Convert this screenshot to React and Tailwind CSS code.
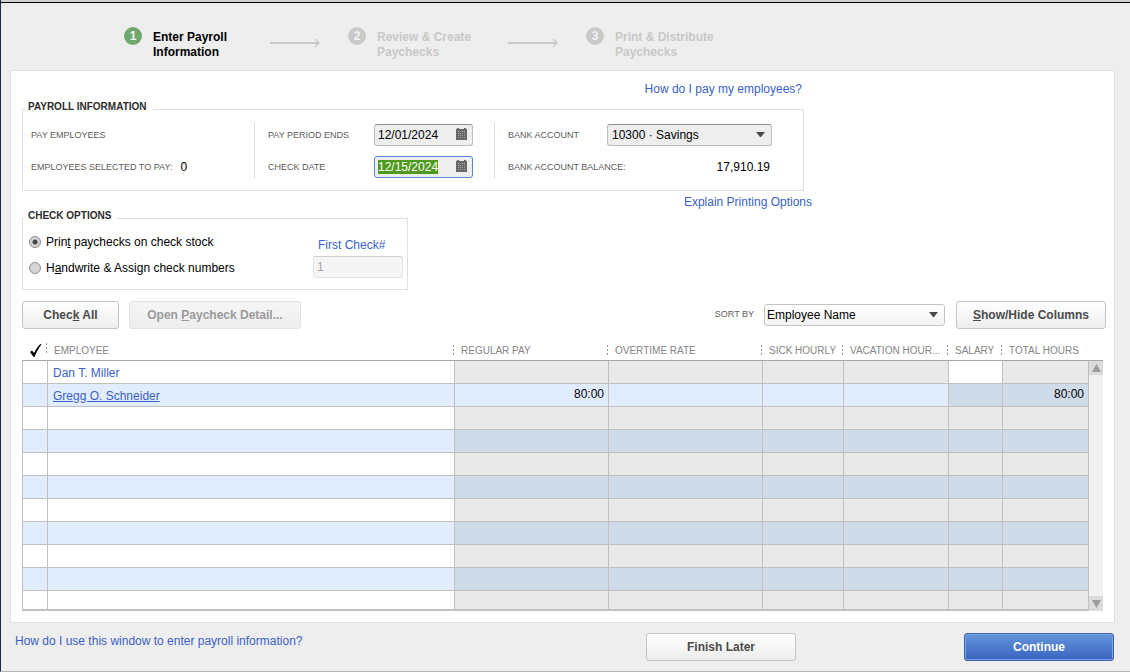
import { useEffect, useRef, useState } from 'react';
import clsx from 'clsx';

const STEPS = [
  { lines: ['Enter Payroll', 'Information'], width: 'w-[117px]' },
  { lines: ['Review & Create', 'Paychecks'], width: 'w-[131px]' },
  { lines: ['Print & Distribute', 'Paychecks'], width: 'w-[131px]' },
];

const COLUMNS = [
  { key: 'regular',  label: 'REGULAR PAY',      width: 'w-[154px]' },
  { key: 'overtime', label: 'OVERTIME RATE',    width: 'w-[154px]' },
  { key: 'sick',     label: 'SICK HOURLY',      width: 'w-[81px]' },
  { key: 'vacation', label: 'VACATION HOUR...', width: 'w-[105px]' },
  { key: 'salary',   label: 'SALARY',           width: 'w-[54px]' },
  { key: 'total',    label: 'TOTAL HOURS',      width: 'w-[86px]' },
];

const EMPLOYEES = [
  { name: 'Dan T. Miller', open: ['salary'], hours: {} },
  {
    name: 'Gregg O. Schneider',
    underline: true,
    open: ['regular', 'overtime', 'sick', 'vacation'],
    hours: { regular: '80:00', total: '80:00' },
  },
];

const ROWS = Array.from({ length: 11 }, (_, i) => EMPLOYEES[i] || { open: [], hours: {} });

const LABEL = 'text-[9px] text-[#5c5c5c]';
const LINK = 'text-[#3a5fc8]';
const LEGEND = 'ml-px pr-[6px] pb-1 pl-1 text-[10px] leading-3 font-bold text-[#2b2b2b]';
const FIELD = 'block h-[22px] w-full rounded-[3px] border bg-[#eeeeee] text-[12px] text-black outline-none';
const FIELD_BORDER = 'border-[#bdbdbd] border-t-[#8f8f8f]';

function Arrow() {
  return (
    <svg width="50" height="10" viewBox="0 0 50 10" className="mt-[11px] mr-7 shrink-0" fill="none" stroke="#c8c8c8">
      <path d="M0 5H49" strokeWidth="2" />
      <path d="M45 1L49 5L45 9" strokeWidth="1.5" />
    </svg>
  );
}

function Caret() {
  return (
    <svg width="9" height="5" viewBox="0 0 9 5" className="pointer-events-none absolute right-[7px] top-2">
      <path d="M0 0H9L5 5H4Z" fill="#4a4a4a" />
    </svg>
  );
}

function CalendarIcon() {
  return (
    <svg width="11" height="12" viewBox="0 0 11 12" className="pointer-events-none absolute right-[6px] top-1">
      <path d="M0 1H1V0H3V1H8V0H10V1H11V12H0Z" fill="#666" />
      <path d="M2 3.5H10M2 5.5H10M2 7.5H10M2 9.5H10" stroke="#a5a5a5" strokeDasharray="1 1" />
    </svg>
  );
}

function Separator() {
  return (
    <svg width="1" height="10" viewBox="0 0 1 10" className="mr-px mb-[5px] shrink-0">
      <path d="M0 0H1V2H0ZM0 4H1V6H0ZM0 8H1V10H0Z" fill="#999" />
    </svg>
  );
}

function DateField({ id, inputRef, active, value, onChange }) {
  return (
    <div className="relative w-[99px]">
      <input
        id={id}
        ref={inputRef}
        type="text"
        value={value}
        onChange={e => onChange(e.target.value)}
        className={clsx(
          FIELD,
          'pl-[3px] selection:bg-[#4e9a1e] selection:text-white',
          active ? 'border-[#5b87d6]' : FIELD_BORDER
        )}
      />
      <CalendarIcon />
    </div>
  );
}

function Button({ className, children, ...props }) {
  return (
    <button
      type="button"
      className={clsx(
        'h-7 rounded-[3px] border border-[#c4c4c4] bg-linear-to-b from-white to-[#ededed] text-[12px] font-bold text-[#4a4a4a]',
        'disabled:border-[#e2e2e2] disabled:from-[#f5f5f5] disabled:to-[#eeeeee] disabled:text-[#9a9a9a]',
        className
      )}
      {...props}
    >
      {children}
    </button>
  );
}

function Radio({ checked, onChange, children }) {
  return (
    <label className="flex h-[26px] items-center gap-[5px]">
      <input
        type="radio"
        name="checkOption"
        checked={checked}
        onChange={onChange}
        className="size-3 appearance-none rounded-full border border-[#8d8d8d] bg-[#d4d4d4] checked:bg-[radial-gradient(circle,#444_0_2px,#d4d4d4_3px)]"
      />
      <span>{children}</span>
    </label>
  );
}

export default function App() {
  const checkDateRef = useRef(null);
  const [periodEnd, setPeriodEnd] = useState('12/01/2024');
  const [checkDate, setCheckDate] = useState('12/15/2024');
  const [option, setOption] = useState('print');

  useEffect(() => {
    checkDateRef.current.focus();
    checkDateRef.current.select();
  }, []);

  return (
    <div className="flex min-h-screen flex-col border-b border-l border-b-[#b5b5b5] border-l-[#1c2b4a] bg-[#eeeeee] font-['Liberation_Sans',Arial,sans-serif] text-[12px] leading-[15px] text-black">
      <div className="h-[3px] border-b border-black bg-[#d2d2d2]" />

      {/* Steps */}
      <ol className="flex h-[67px] pt-6 pl-[123px]">
        {STEPS.map((step, i) => (
          <li key={i} className="flex">
            <span
              className={clsx(
                'mr-[11px] flex size-[18px] items-center justify-center rounded-full text-[12px] font-bold text-[#f3f3f3]',
                i === 0 ? 'bg-[#6fa86c]' : 'bg-[#c9c9c9]'
              )}
            >
              {i + 1}
            </span>
            <span className={clsx('pt-[3px] font-bold', step.width, i === 0 ? 'text-black' : 'text-[#c8c8c8]')}>
              {step.lines[0]}<br />{step.lines[1]}
            </span>
            {i < STEPS.length - 1 && <Arrow />}
          </li>
        ))}
      </ol>

      <main className="mr-[15px] ml-[9px] border border-[#e0e0e0] bg-white pt-[11px] pb-[11px] pl-[11px]">
        <div className="flex max-w-[780px] justify-end">
          <a href="#help" className={LINK}>How do I pay my employees?</a>
        </div>

        {/* Payroll information */}
        <fieldset className="mt-1 max-w-[782px] border border-[#e0e0e0]">
          <legend className={LEGEND}>PAYROLL INFORMATION</legend>
          <div className="mt-[6px] mb-[11px] flex">
            <div className="flex w-[231px] flex-col gap-[10px] py-px pl-2">
              <div className="flex h-[22px] items-center"><span className={LABEL}>PAY EMPLOYEES</span></div>
              <div className="flex h-[22px] items-center gap-2">
                <span className={LABEL}>EMPLOYEES SELECTED TO PAY:</span>
                <span>0</span>
              </div>
            </div>
            <div className="flex w-60 flex-col gap-[10px] border-l border-[#e0e0e0] py-px pl-[13px]">
              <div className="flex items-center">
                <label htmlFor="periodEnd" className={clsx(LABEL, 'w-[106px]')}>PAY PERIOD ENDS</label>
                <DateField id="periodEnd" value={periodEnd} onChange={setPeriodEnd} />
              </div>
              <div className="flex items-center">
                <label htmlFor="checkDate" className={clsx(LABEL, 'w-[106px]')}>CHECK DATE</label>
                <DateField id="checkDate" inputRef={checkDateRef} active value={checkDate} onChange={setCheckDate} />
              </div>
            </div>
            <div className="flex flex-1 flex-col gap-[10px] border-l border-[#e0e0e0] py-px pr-[31px] pl-[13px]">
              <div className="flex items-center justify-between">
                <label htmlFor="bank" className={LABEL}>BANK ACCOUNT</label>
                <div className="relative w-[165px]">
                  <select id="bank" className={clsx(FIELD, FIELD_BORDER, 'appearance-none pl-1')}>
                    <option>10300 · Savings</option>
                  </select>
                  <Caret />
                </div>
              </div>
              <div className="flex h-[22px] items-center justify-between pr-[2px]">
                <span className={LABEL}>BANK ACCOUNT BALANCE:</span>
                <span>17,910.19</span>
              </div>
            </div>
          </div>
        </fieldset>

        <div className="mt-1 flex max-w-[790px] justify-end">
          <a href="#printing" className={LINK}>Explain Printing Options</a>
        </div>

        {/* Check options */}
        <fieldset className="max-w-[386px] border border-[#e0e0e0]">
          <legend className={LEGEND}>CHECK OPTIONS</legend>
          <div className="flex justify-between pt-[3px] pr-1 pb-2 pl-[6px]">
            <div>
              <Radio checked={option === 'print'} onChange={() => setOption('print')}>
                Prin<u>t</u> paychecks on check stock
              </Radio>
              <Radio checked={option === 'hand'} onChange={() => setOption('hand')}>
                H<u>a</u>ndwrite &amp; Assign check numbers
              </Radio>
            </div>
            <div className="w-[90px] pt-[9px]">
              <label htmlFor="firstCheck" className={clsx(LINK, 'mb-[3px] block pl-[5px]')}>First Check#</label>
              <input
                id="firstCheck"
                type="text"
                defaultValue="1"
                disabled
                className="block h-[22px] w-full rounded-[3px] border border-[#e4e4e4] border-t-[#d0d0d0] bg-[#f5f5f5] pl-[3px] text-[12px] text-[#a5a5a5]"
              />
            </div>
          </div>
        </fieldset>

        {/* Toolbar */}
        <div className="mt-[11px] mr-2 flex items-center">
          <Button className="w-[97px]">Chec<u>k</u> All</Button>
          <Button className="ml-[10px] w-[172px]" disabled>Open <u>P</u>aycheck Detail...</Button>
          <label htmlFor="sortBy" className={clsx(LABEL, 'mr-[10px] ml-auto pb-[2px]')}>SORT BY</label>
          <div className="relative w-[181px]">
            <select
              id="sortBy"
              className="block h-[22px] w-full appearance-none rounded-[3px] border border-[#c4c4c4] bg-linear-to-b from-white to-[#f2f2f2] pl-[2px] text-[12px] text-black"
            >
              <option>Employee Name</option>
            </select>
            <Caret />
          </div>
          <Button className="ml-[11px] w-[150px]"><u>S</u>how/Hide Columns</Button>
        </div>

        {/* Employees */}
        <div className="mt-3 mr-[11px] flex">
          <table className="flex-1 table-fixed border-separate border-spacing-0">
            <thead>
              <tr className="h-5 text-left text-[10px] leading-[18px] text-[#858585]">
                <th className="w-[26px] border-b border-[#a8a8a8] p-0">
                  <div className="flex items-end justify-between pl-2">
                    <svg width="12" height="13" viewBox="0 0 12 13" className="mb-px" role="img" aria-label="Selected">
                      <path d="M0 8L2 6.5L4 9C6 5 8 2 10.5 0L11.5 .5C8.500 4 6.500 8 4.500 13H3.500Z" fill="#000" />
                    </svg>
                    <Separator />
                  </div>
                </th>
                <th className="border-b border-[#a8a8a8] p-0 font-normal">
                  <div className="flex items-end justify-between pl-[6px]">EMPLOYEE<Separator /></div>
                </th>
                {COLUMNS.map((col, i) => (
                  <th key={col.key} className={clsx('border-b border-[#a8a8a8] p-0 font-normal whitespace-nowrap', col.width)}>
                    <div className="flex items-end justify-between pl-[6px]">
                      {col.label}
                      {i < COLUMNS.length - 1 && <Separator />}
                    </div>
                  </th>
                ))}
              </tr>
            </thead>
            <tbody>
              {ROWS.map((row, r) => {
                const odd = r % 2 === 1;
                const last = r === ROWS.length - 1;
                const line = clsx('border-r border-[#c0c0c0] p-0', last ? 'border-b-2' : 'border-b');
                const open = odd ? 'bg-[#e1edfe]' : 'bg-white';
                const closed = odd ? 'bg-[#cfdbe9]' : 'bg-[#e9e9e9]';
                return (
                  <tr key={r} className={last ? 'h-5' : 'h-[23px]'}>
                    <td className={clsx(line, open, 'border-l')} />
                    <td className={clsx(line, open)}>
                      {row.name && (
                        <a href="#employee" className={clsx(LINK, 'block pt-[2px] pl-[5px]', row.underline && 'underline')}>
                          {row.name}
                        </a>
                      )}
                    </td>
                    {COLUMNS.map(col => (
                      <td key={col.key} className={clsx(line, row.open.includes(col.key) ? open : closed, 'text-right')}>
                        <span className="block pr-1 pb-px">{row.hours[col.key]}</span>
                      </td>
                    ))}
                  </tr>
                );
              })}
            </tbody>
          </table>
          <div className="mt-[19px] flex w-[14px] flex-col justify-between border-t border-[#a8a8a8] bg-[#f1f1f1]">
            <button type="button" aria-label="Scroll up" className="flex h-[14px] items-center justify-center bg-[#dcdcdc]">
              <svg width="9" height="8" viewBox="0 0 9 8"><path d="M4.500 0L9 8H0Z" fill="#9c9c9c" /></svg>
            </button>
            <button type="button" aria-label="Scroll down" className="flex h-[15px] items-center justify-center bg-[#dcdcdc]">
              <svg width="9" height="8" viewBox="0 0 9 8"><path d="M0 0H9L4.500 8Z" fill="#9c9c9c" /></svg>
            </button>
          </div>
        </div>
      </main>

      <footer className="flex items-start pt-[10px] pr-4 pb-[9px] pl-[14px]">
        <a href="#window-help" className={clsx(LINK, 'pt-px')}>How do I use this window to enter payroll information?</a>
        <Button className="ml-auto w-[150px]">Finish Later</Button>
        <button
          type="button"
          className="ml-[168px] h-7 w-[150px] rounded-[3px] border border-[#3e60a8] bg-linear-to-b from-[#6496dc] to-[#3a62c0] text-[12px] font-bold text-white inset-ring inset-ring-[#7ba3e4]"
        >
          Continue
        </button>
      </footer>
    </div>
  );
}
